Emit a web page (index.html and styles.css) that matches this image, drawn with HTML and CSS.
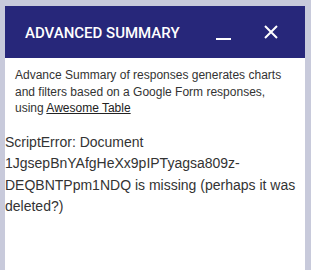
FILE: index.html
```html
<!DOCTYPE html>
<html lang="en">
<head>
    <meta charset="UTF-8">
    <title>Advanced Summary</title>
    <link rel="stylesheet" href="styles.css">
</head>
<body>
    <div class="panel">
        <div class="header">
            <span class="title">ADVANCED SUMMARY</span>
            <span class="minimize"></span>
            <svg class="close" width="14" height="14" viewBox="0 0 14 14">
                <path d="M1 1 L13 13 M13 1 L1 13" stroke="#fff" stroke-width="2" fill="none"/>
            </svg>
        </div>
        <div class="desc">
            Advance Summary of responses generates charts and filters based on a Google Form responses, using <a href="#">Awesome Table</a>
        </div>
        <div class="error">
            ScriptError: Document 1JgsepBnYAfgHeXx9pIPTyagsa809z-DEQBNTPpm1NDQ is missing (perhaps it was deleted?)
        </div>
    </div>
</body>
</html>
```

FILE: styles.css
```css
body {
    margin: 0;
    background-color: #c8cadb;
    height: 270px;
    overflow: hidden;
}
.panel {
    margin: 6px 6px 0 5px;
    background: white;
    height: 264px;
}
.header {
    background-color: #27277a;
    height: 52px;
    display: flex;
    align-items: center;
    padding: 0 20px;
    color: white;
}
.title {
    font-family: Roboto, sans-serif;
    font-weight: 500;
    font-size: 15px;
    flex: 1;
    margin-top: 1px;
}
.minimize {
    width: 15px;
    height: 2px;
    background: white;
    margin-top: 14px;
    margin-right: 33px;
}
.close {
    margin-right: 7px;
}
.desc {
    font-family: Arial, "Liberation Sans", sans-serif;
    font-size: 12px;
    line-height: 16.5px;
    color: #333;
    padding: 9px 10px 0 10px;
}
.desc a {
    color: #222;
}
.error {
    font-family: Arial, "Liberation Sans", sans-serif;
    font-size: 14px;
    line-height: 21.5px;
    color: #333;
    padding: 15px 0 0 0;
}
```
